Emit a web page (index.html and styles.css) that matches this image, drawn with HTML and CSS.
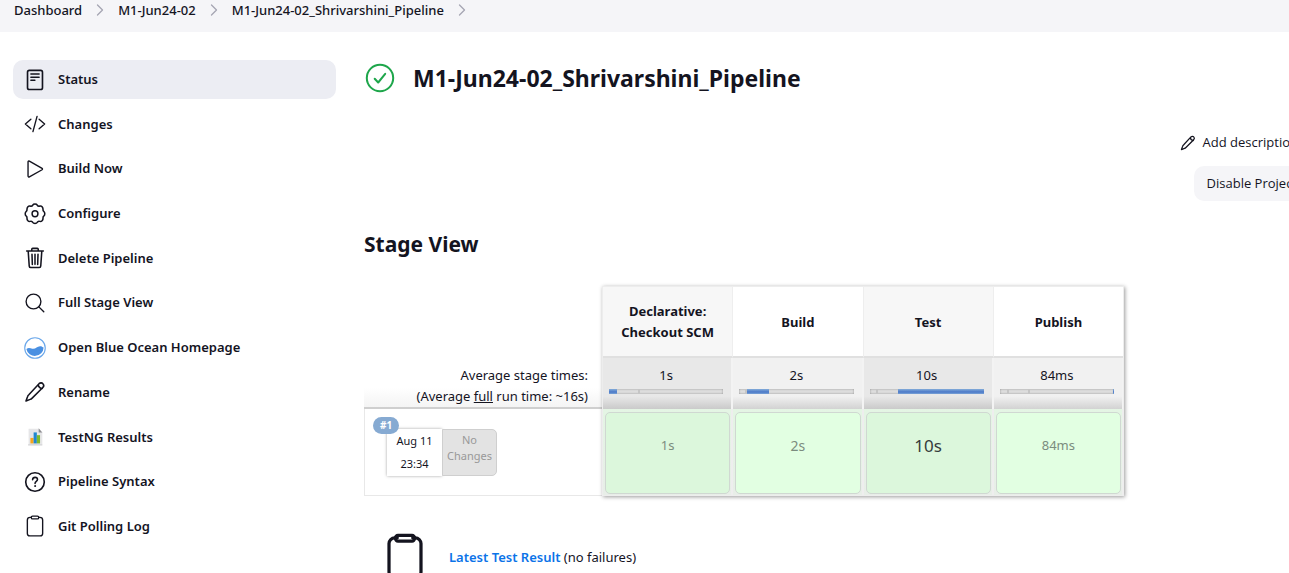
FILE: index.html
```html
<!DOCTYPE html>
<html lang="en">
<head>
<meta charset="utf-8">
<title>M1-Jun24-02_Shrivarshini_Pipeline</title>
<link rel="stylesheet" href="styles.css">
</head>
<body>
<nav class="breadcrumbs" aria-label="Breadcrumb">
  <a href="#">Dashboard</a>
  <svg class="chevron" viewBox="0 0 8 12"><path d="M1.5 1l5 5-5 5"/></svg>
  <a href="#">M1-Jun24-02</a>
  <svg class="chevron" viewBox="0 0 8 12"><path d="M1.5 1l5 5-5 5"/></svg>
  <a href="#">M1-Jun24-02_Shrivarshini_Pipeline</a>
  <svg class="chevron" viewBox="0 0 8 12"><path d="M1.5 1l5 5-5 5"/></svg>
</nav>
<div class="page">
  <nav class="sidebar" aria-label="Project">
    <a class="task task-active" href="#"><svg class="icon" viewBox="0 0 512 512"><rect x="82" y="32" width="348" height="446" rx="42" stroke-width="38"/><path d="M160 118h192M160 190h192M160 262h94" stroke-width="34"/></svg>Status</a>
    <a class="task" href="#"><svg class="icon" viewBox="0 0 512 512"><path d="M160 368L32 256l128-112M352 368l128-112-128-112M304 80l-96 352"/></svg>Changes</a>
    <a class="task" href="#"><svg class="icon" viewBox="0 0 512 512"><path d="M94 92v328c0 17.440 17 28.520 31 20.160l296-166.370c12.120-7.250 12.120-26.330 0-33.580L125 71.840c-14-8.360-31 2.720-31 20.160z"/></svg>Build Now</a>
    <a class="task" href="#"><svg class="icon" viewBox="0 0 512 512"><circle cx="256" cy="250" r="68" stroke-width="34"/><path stroke-width="36" d="M204 48c18-32 86-32 104 0 12 24 36 34 62 24 36-12 76 30 72 74-3 24 0 40 22 54 26 20 26 80 0 100-22 14-25 30-22 54 4 44-36 86-72 74-26-10-50 0-62 24-18 32-86 32-104 0-12-24-36-34-62-24-36 12-76-30-72-74 3-24 0-40-22-54-26-20-26-80 0-100 22-14 25-30 22-54-4-44 36-86 72-74 26 10 50 0 62-24z"/></svg>Configure</a>
    <a class="task" href="#"><svg class="icon" viewBox="0 0 512 512"><path stroke-width="36" d="M98 100l24 344c1 18 16 34 36 34h196c20 0 35-16 36-34l24-344M62 92h388M180 88V56a24 24 0 0124-24h104a24 24 0 0124 24v32M256 170v234M186 170l8 234M326 170l-8 234"/></svg>Delete Pipeline</a>
    <a class="task" href="#"><svg class="icon" viewBox="0 0 512 512"><circle cx="221" cy="221" r="172"/><path d="M346 346l114 114"/></svg>Full Stage View</a>
    <a class="task" href="#"><svg class="icon icon-color" viewBox="0 0 24 24"><circle cx="12" cy="12" r="11.200" fill="#fff" stroke="#6aa7ea" stroke-width="1.200"/><path d="M2.600 13c2.400-1.600 4.500-.6 6.400-.2 3.800.7 5-2.800 8.500-2.800 1.800 0 2.700.8 3.900 1.500A9.500 9.500 0 0 1 2.600 13z" fill="#4a90e2"/></svg>Open Blue Ocean Homepage</a>
    <a class="task" href="#"><svg class="icon" viewBox="0 0 512 512"><path stroke-width="36" d="M350 62c28-26 70-24 90 0 24 26 26 60-2 88L190 398c-14 14-28 24-46 30l-98 38 36-100c6-18 16-32 30-46zM330 84c8 50 48 88 98 92"/></svg>Rename</a>
    <a class="task" href="#"><svg class="icon icon-color" viewBox="0 0 24 24"><path d="M5 3h11l4 4v13H5z" fill="#e6e6e8"/><path d="M16 2.500V7h4z" fill="#8e8e92"/><path d="M4.500 20h15.500v1.200H4.500z" fill="#c9c9cc"/><path d="M7 13h3.500v6H7z" fill="#f8a51b"/><path d="M10.500 7H14v12h-3.500z" fill="#2287cf"/><path d="M14 10h3.500v9H14z" fill="#7dbb2c"/></svg>TestNG Results</a>
    <a class="task" href="#"><svg class="icon" viewBox="0 0 512 512"><circle cx="256" cy="256" r="216" stroke-width="38"/><path d="M200 202c2-42 32-54 58-54 32 0 56 20 56 50 0 42-57 44-57 90" stroke-width="36"/><circle cx="257" cy="350" r="12" fill="currentColor" stroke-width="22"/></svg>Pipeline Syntax</a>
    <a class="task" href="#"><svg class="icon" viewBox="0 0 512 512"><path d="M342 54h28a64 64 0 0 1 64 64v312a56 56 0 0 1-56 56H134a56 56 0 0 1-56-56V118a64 64 0 0 1 64-64h28"/><rect x="170" y="26" width="172" height="64" rx="28"/></svg>Git Polling Log</a>
  </nav>
  <main class="main">
    <h1 class="title"><svg class="status-icon" viewBox="0 0 32 32"><circle cx="16" cy="16" r="13.200"/><path d="M10.700 16.700l3.500 3.800 7-8.600"/></svg>M1-Jun24-02_Shrivarshini_Pipeline</h1>
    <div class="actions">
      <a class="edit" href="#"><svg class="edit-icon" viewBox="0 0 512 512"><path d="M350 62c28-26 70-24 90 0 24 26 26 60-2 88L190 398c-14 14-28 24-46 30l-98 38 36-100c6-18 16-32 30-46zM330 84c8 50 48 88 98 92"/></svg>Add description</a>
      <button class="disable" type="button">Disable Project</button>
    </div>
    <h2 class="heading">Stage View</h2>
    <div class="stages">
      <table class="stage-table">
        <thead>
          <tr class="names"><td class="lead"></td><th scope="col">Declarative: Checkout SCM</th><th scope="col">Build</th><th scope="col">Test</th><th scope="col">Publish</th></tr>
        </thead>
        <tbody>
          <tr class="averages">
            <th class="lead" scope="row">Average stage times:<br>(Average <u>full</u> run time: ~16s)</th>
            <td>1s<div class="meter"><span class="fill" style="left:0;width:7%"></span><span class="tick" style="left:25%"></span></div></td>
            <td>2s<div class="meter"><span class="tick" style="left:5%"></span><span class="fill" style="left:7%;width:19%"></span></div></td>
            <td>10s<div class="meter"><span class="tick" style="left:6%"></span><span class="fill" style="left:25%;width:75%"></span></div></td>
            <td>84ms<div class="meter"><span class="tick" style="left:6%"></span><span class="tick" style="left:25%"></span><span class="fill" style="left:99%;width:1%"></span></div></td>
          </tr>
          <tr class="run">
            <th class="lead" scope="row">
              <div class="run-info">
                <a class="badge" href="#">#1</a>
                <div class="date">Aug 11<br>23:34</div>
                <div class="changes">No Changes</div>
              </div>
            </th>
            <td><div class="stage">1s</div></td>
            <td><div class="stage stage-mid">2s</div></td>
            <td><div class="stage stage-long">10s</div></td>
            <td><div class="stage">84ms</div></td>
          </tr>
        </tbody>
      </table>
    </div>
    <div class="result">
      <svg class="result-icon" viewBox="0 0 512 512"><path d="M342 54h28a64 64 0 0 1 64 64v312a56 56 0 0 1-56 56H134a56 56 0 0 1-56-56V118a64 64 0 0 1 64-64h28"/><rect x="150" y="26" width="212" height="64" rx="28"/></svg>
      <p class="result-text"><a href="#">Latest Test Result</a> (no failures)</p>
    </div>
  </main>
</div>
</body>
</html>
```

FILE: styles.css
```css
* { box-sizing: border-box; }
html { height: 100%; }
body {
  height: 100%;
  margin: 0;
  overflow: hidden;
  background: #fff;
  color: #14141f;
  font: 13px/21px "Noto Sans", "Open Sans", sans-serif;
}
a { color: inherit; text-decoration: none; }
svg { flex: none; fill: none; stroke: currentColor; stroke-linecap: round; stroke-linejoin: round; }

.breadcrumbs {
  display: flex;
  align-items: center;
  gap: 14px;
  height: 32px;
  padding: 0 14px 12px;
  background: #f5f5f8;
  font-weight: 500;
}
.chevron { width: 8px; height: 12px; margin-bottom: 1px; stroke: #a5a5b3; stroke-width: 1.3; }

.page { display: flex; gap: 28px; padding: 28px 0 0 13px; }
.sidebar {
  display: flex;
  flex: none;
  flex-direction: column;
  justify-content: space-between;
  width: 323px;
  height: 486px;
  font-weight: 600;
}
.task {
  display: flex;
  align-items: center;
  gap: 12px;
  height: 39px;
  padding: 0 11px;
  border-radius: 10px;
}
.task-active { background: #ecedf3; }
.icon { width: 22px; height: 22px; stroke-width: 32; }
.icon-color { stroke: none; }

.main { flex: 1; min-width: 0; }
.title {
  display: flex;
  align-items: center;
  gap: 17px;
  margin: 0;
  font-size: 23px;
  line-height: 36px;
  font-weight: 700;
}
.status-icon { width: 32px; height: 32px; stroke: #1ea64b; stroke-width: 2; }
.actions {
  display: flex;
  flex-direction: column;
  align-items: flex-end;
  gap: 6px;
  margin: 29px -21px 0 0;
  font-family: "Open Sans", "Noto Sans", sans-serif;
  font-weight: 500;
}
.edit { display: flex; align-items: center; gap: 7px; height: 35px; padding: 0 12px; }
.edit-icon { width: 16px; height: 16px; stroke-width: 40; }
.disable {
  height: 35px;
  padding: 0 13px;
  border: 0;
  border-radius: 10px;
  background: #f5f5f8;
  color: inherit;
  font: inherit;
}
.heading { margin: 29px 0 28px; font-size: 21px; line-height: 28px; font-weight: 700; }

.stages { position: relative; width: 760px; }
.stages::after {
  content: "";
  position: absolute;
  inset: 0 0 0 238px;
  border: 1px solid #ededed;
  box-shadow: 1px 1px 4px rgba(0, 0, 0, .4);
  pointer-events: none;
}
.stage-table { width: 100%; border-collapse: separate; border-spacing: 0; table-layout: fixed; text-align: center; }
.stage-table td, .stage-table th { padding: 0; }
.stage-table .lead { width: 239px; }
.stage-table .names th { height: 72px; padding: 2px 14px 0; border-bottom: 2px solid #e0e0e0; border-right: 1px solid #eee; }
.names th:nth-child(even) { background: #f7f7f7; }
.stage-table .averages td {
  height: 51px;
  padding: 7px 8px 0 6px;
  border-right: 2px solid #f3f3f3;
  background: linear-gradient(#f1f1f1 75%, #d2d2d2);
  vertical-align: top;
}
.stage-table .averages td:nth-child(even) { background: linear-gradient(#e8e8e8 75%, #cacaca); }
.stage-table .averages .lead {
  padding: 7px 15px 0 0;
  border-bottom: 2px solid #cfcfcf;
  background: linear-gradient(#fff 60%, #f4f4f4);
  text-align: right;
  font-weight: 400;
}
.meter { position: relative; height: 5px; margin-top: 3px; background: #ddd; box-shadow: inset 0 0 2px #888; overflow: hidden; }
.fill { position: absolute; top: 0; bottom: 0; background: linear-gradient(#85add9, #4a78c8 60%, #7ba4d6); }
.tick { position: absolute; top: 0; bottom: 0; width: 2px; background: #c5c5c5; }

.stage-table .run td { padding: 3px 1px 2px 2px; border-right: 2px solid #eee; background: linear-gradient(#e4f5e4, #e8eee8); }
.run .lead { border: solid #e8e8e8; border-width: 0 0 1px 1px; font-weight: 400; vertical-align: top; }
.stage {
  height: 82px;
  padding-top: 22px;
  border: 1px solid #d0d8d2;
  border-radius: 5px;
  background: #e2ffe2;
  color: #7b8c7e;
}
.run td:nth-child(even) .stage { background: #dcf7dc; }
.stage-mid { font-size: 14px; }
.stage-long { color: #353c3b; font-size: 17px; }
.run-info { position: relative; display: flex; width: 110px; height: 47px; margin: 20px 0 0 22px; }
.badge {
  position: absolute;
  top: -12px;
  left: -14px;
  padding: 0 7px;
  border-radius: 9px;
  background: #86aad2;
  color: #fff;
  font-size: 10px;
  line-height: 17px;
  font-weight: 700;
}
.date { width: 55px; background: #fff; box-shadow: 0 0 3px rgba(0, 0, 0, .35); font-size: 11px; line-height: 23px; }
.changes {
  flex: 1;
  padding-top: 2px;
  border: 1px solid #cfcfcf;
  border-radius: 0 5px 5px 0;
  background: #e3e3e3;
  color: #999;
  font-size: 11px;
  line-height: 16px;
}

.result { display: flex; gap: 21px; margin-top: 37px; padding-left: 18px; }
.result-icon { width: 46px; height: 46px; stroke-width: 36; }
.result-text { margin: 14px 0 0; }
.result-text a { color: #0b73e8; font-weight: 600; }
```
